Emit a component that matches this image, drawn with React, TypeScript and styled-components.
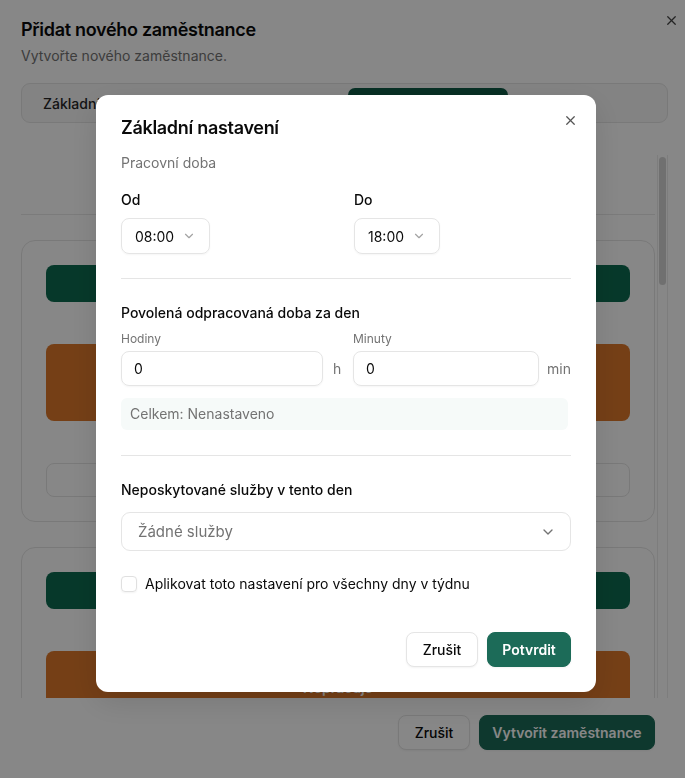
import React from "react";
import styled, { createGlobalStyle } from "styled-components";

const Global = createGlobalStyle`
  html, body { margin: 0; padding: 0; background: #fff; }
  body { font-family: Inter, "Noto Sans", "Liberation Sans", sans-serif; color: #0a0a0a; }
  * { box-sizing: border-box; }
`;

const GREEN = "#1c6b58";
const ORANGE = "#dd782b";

const Page = styled.div`
  position: relative;
  width: 685px;
  height: 778px;
  overflow: hidden;
  padding: 17px 17px 0 21px;
  display: flex;
  flex-direction: column;
`;

const PageTitle = styled.h1`
  margin: 0;
  font-size: 18px;
  line-height: 26px;
  font-weight: 600;
  letter-spacing: -0.3px;
`;

const PageSub = styled.p`
  margin: 0;
  font-size: 14px;
  line-height: 26px;
  color: #737373;
`;

const CloseBtn = styled.button<{ $top: number; $right: number }>`
  position: absolute;
  top: ${(p) => p.$top}px;
  right: ${(p) => p.$right}px;
  width: 16px;
  height: 16px;
  padding: 0;
  border: 0;
  background: none;
  display: flex;
  align-items: center;
  justify-content: center;
`;

const Tabs = styled.div`
  margin-top: 14px;
  height: 40px;
  border: 1px solid #e5e5e5;
  border-radius: 9px;
  background: #f7f7f7;
  display: flex;
  align-items: center;
  padding: 4px;
  gap: 4px;
`;

const Tab = styled.div<{ $active?: boolean }>`
  height: 100%;
  width: ${(p) => (p.$active ? 160 : 157)}px;
  display: flex;
  align-items: center;
  justify-content: ${(p) => (p.$active ? "center" : "flex-start")};
  padding-left: ${(p) => (p.$active ? "0" : "17px")};
  border-radius: 7px;
  font-size: 14px;
  font-weight: 500;
  background: ${(p) => (p.$active ? "#0f5a45" : "transparent")};
  color: ${(p) => (p.$active ? "#fff" : "#262626")};
`;

const Scroll = styled.div`
  margin-top: 32px;
  height: 543px;
  display: flex;
`;

const ScrollContent = styled.div`
  flex: 1;
  overflow: hidden;
  padding-right: 2px;
  display: flex;
  flex-direction: column;
`;

const Track = styled.div`
  width: 11px;
  border-left: 1px solid #ececec;
  border-right: 1px solid #ececec;
  padding: 2px 1px;
`;

const Thumb = styled.div`
  height: 128px;
  border-radius: 4px;
  background: #d4d4d4;
`;

const DayPicker = styled.div`
  height: 60px;
  border-bottom: 1px solid #e8e8e8;
  flex-shrink: 0;
`;

const Card = styled.div`
  margin-top: 25px;
  border: 1px solid #e5e5e5;
  border-radius: 14px;
  padding: 24px 24px;
  display: flex;
  flex-direction: column;
  gap: 42px;
  flex-shrink: 0;
`;

const Bar = styled.div<{ $kind: "work" | "off" }>`
  height: ${(p) => (p.$kind === "work" ? 37 : 77)}px;
  border-radius: 8px;
  background: ${(p) => (p.$kind === "work" ? "#0d6b50" : ORANGE)};
  color: #fff;
  font-size: 14px;
  font-weight: 600;
  display: flex;
  align-items: flex-end;
  justify-content: center;
  padding-bottom: 32px;
`;

const OutlineBar = styled.div`
  height: 34px;
  border: 1px solid #e5e5e5;
  border-radius: 8px;
  background: #fff;
`;

const Footer = styled.div`
  margin-top: 17px;
  padding-right: 13px;
  display: flex;
  justify-content: flex-end;
  gap: 9px;
`;

const Button = styled.button<{ $primary?: boolean; $w: number }>`
  width: ${(p) => p.$w}px;
  height: 35px;
  border-radius: 8px;
  font-family: inherit;
  font-size: 14px;
  font-weight: ${(p) => (p.$primary ? 600 : 500)};
  border: 1px solid ${(p) => (p.$primary ? GREEN : "#e5e5e5")};
  background: ${(p) => (p.$primary ? GREEN : "#fff")};
  color: ${(p) => (p.$primary ? "#fff" : "#0a0a0a")};
  box-shadow: 0 1px 2px rgba(0, 0, 0, 0.05);
  padding: 0;
`;

const Overlay = styled.div`
  position: fixed;
  inset: 0;
  background: rgba(0, 0, 0, 0.47);
  display: flex;
  justify-content: center;
  align-items: flex-start;
  padding: 95px 0 0 7px;
`;

const Modal = styled.div`
  position: relative;
  width: 500px;
  background: #fff;
  border-radius: 12px;
  padding: 22px 25px 25px 25px;
  display: flex;
  flex-direction: column;
  box-shadow: 0 10px 30px rgba(0, 0, 0, 0.12);
`;

const ModalTitle = styled.h2`
  margin: 0;
  font-size: 18px;
  line-height: 22px;
  font-weight: 600;
  letter-spacing: -0.3px;
`;

const Text = styled.div<{ $mt: number; $muted?: boolean; $weight?: number }>`
  margin-top: ${(p) => p.$mt}px;
  font-size: 14px;
  line-height: 20px;
  font-weight: ${(p) => p.$weight ?? 400};
  color: ${(p) => (p.$muted ? "#737373" : "#0a0a0a")};
`;

const TimeRow = styled.div`
  margin-top: 17px;
  display: grid;
  grid-template-columns: 233px 1fr;
`;

const Field = styled.div`
  display: flex;
  flex-direction: column;
  align-items: flex-start;
  gap: 8px;
`;

const FieldLabel = styled.div`
  font-size: 14px;
  line-height: 20px;
  font-weight: 500;
`;

const TimeSelect = styled.div<{ $w: number }>`
  width: ${(p) => p.$w}px;
  height: 36px;
  border: 1px solid #e5e5e5;
  border-radius: 8px;
  box-shadow: 0 1px 2px rgba(0, 0, 0, 0.04);
  display: flex;
  align-items: center;
  padding: 0 13px 0 13px;
  justify-content: space-between;
  font-size: 14px;
  color: #0a0a0a;
`;

const Divider = styled.hr<{ $mt: number }>`
  margin: ${(p) => p.$mt}px 0 0 0;
  border: 0;
  border-top: 1px solid #e5e5e5;
  height: 0;
`;

const DurRow = styled.div`
  margin-top: 8px;
  display: grid;
  grid-template-columns: 202px 30px 186px 1fr;
  grid-template-rows: 16px 35px;
  row-gap: 4px;
  align-items: center;
`;

const SmallLabel = styled.div<{ $col: number }>`
  grid-column: ${(p) => p.$col};
  grid-row: 1;
  font-size: 12px;
  line-height: 16px;
  color: #737373;
`;

const NumInput = styled.div<{ $col: number }>`
  grid-column: ${(p) => p.$col};
  grid-row: 2;
  height: 35px;
  border: 1px solid #e5e5e5;
  border-radius: 8px;
  box-shadow: 0 1px 2px rgba(0, 0, 0, 0.04);
  display: flex;
  align-items: center;
  padding-left: 12px;
  font-size: 14px;
`;

const Unit = styled.div<{ $col: number; $align: string }>`
  grid-column: ${(p) => p.$col};
  grid-row: 2;
  font-size: 14px;
  color: #737373;
  text-align: ${(p) => p.$align};
  padding-left: ${(p) => (p.$align === "left" ? "10px" : "0")};
`;

const TotalBox = styled.div`
  margin-top: 12px;
  height: 32px;
  width: 447px;
  border-radius: 6px;
  background: #f6faf9;
  display: flex;
  align-items: center;
  padding: 0 0 2px 9px;
  font-size: 14px;
  color: #737373;
`;

const ServiceSelect = styled.div`
  margin-top: 12px;
  height: 39px;
  border: 1px solid #e5e5e5;
  border-radius: 9px;
  display: flex;
  align-items: center;
  justify-content: space-between;
  padding: 0 14px 0 16px;
  font-size: 15px;
  color: #737373;
`;

const CheckRow = styled.label`
  margin-top: 25px;
  display: flex;
  align-items: center;
  gap: 8px;
  font-size: 14px;
  line-height: 16px;
`;

const Box = styled.span`
  width: 16px;
  height: 16px;
  border: 1px solid #e0e0e0;
  border-radius: 4px;
  box-shadow: 0 1px 2px rgba(0, 0, 0, 0.05);
`;

const Actions = styled.div`
  margin-top: 40px;
  display: flex;
  justify-content: flex-end;
  gap: 9px;
`;

const Chevron = ({ size, color }: { size: number; color: string }) => (
  <svg width={size} height={size} viewBox="0 0 24 24" fill="none" stroke={color} strokeWidth="2" strokeLinecap="round" strokeLinejoin="round">
    <path d="m6 9 6 6 6-6" />
  </svg>
);

const XIcon = ({ size, color }: { size: number; color: string }) => (
  <svg width={size} height={size} viewBox="0 0 24 24" fill="none" stroke={color} strokeWidth="2" strokeLinecap="round" strokeLinejoin="round">
    <path d="M18 6 6 18" />
    <path d="m6 6 12 12" />
  </svg>
);

export default function App() {
  return (
    <>
      <Global />
      <Page>
        <PageTitle>Přidat nového zaměstnance</PageTitle>
        <PageSub>Vytvořte nového zaměstnance.</PageSub>
        <CloseBtn $top={12} $right={6}>
          <XIcon size={15} color="#444" />
        </CloseBtn>
        <Tabs>
          <Tab>Základní</Tab>
          <Tab />
          <Tab $active />
        </Tabs>
        <Scroll>
          <ScrollContent>
            <DayPicker />
            <Card>
              <Bar $kind="work" />
              <Bar $kind="off" />
              <OutlineBar />
            </Card>
            <Card>
              <Bar $kind="work" />
              <Bar $kind="off">Nepracuje</Bar>
              <OutlineBar />
            </Card>
          </ScrollContent>
          <Track>
            <Thumb />
          </Track>
        </Scroll>
        <Footer>
          <Button $w={72}>Zrušit</Button>
          <Button $primary $w={176}>Vytvořit zaměstnance</Button>
        </Footer>
      </Page>

      <Overlay>
        <Modal>
          <CloseBtn $top={17} $right={18}>
            <XIcon size={15} color="#555" />
          </CloseBtn>
          <ModalTitle>Základní nastavení</ModalTitle>
          <Text $mt={14} $muted>Pracovní doba</Text>
          <TimeRow>
            <Field>
              <FieldLabel>Od</FieldLabel>
              <TimeSelect $w={89}>
                08:00 <Chevron size={14} color="#a3a3a3" />
              </TimeSelect>
            </Field>
            <Field>
              <FieldLabel>Do</FieldLabel>
              <TimeSelect $w={86}>
                18:00 <Chevron size={14} color="#a3a3a3" />
              </TimeSelect>
            </Field>
          </TimeRow>
          <Divider $mt={24} />
          <Text $mt={24} $weight={500}>Povolená odpracovaná doba za den</Text>
          <DurRow>
            <SmallLabel $col={1}>Hodiny</SmallLabel>
            <SmallLabel $col={3}>Minuty</SmallLabel>
            <NumInput $col={1}>0</NumInput>
            <Unit $col={2} $align="left">h</Unit>
            <NumInput $col={3}>0</NumInput>
            <Unit $col={4} $align="right">min</Unit>
          </DurRow>
          <TotalBox>Celkem: Nenastaveno</TotalBox>
          <Divider $mt={25} />
          <Text $mt={24} $weight={500}>Neposkytované služby v tento den</Text>
          <ServiceSelect>
            Žádné služby <Chevron size={16} color="#737373" />
          </ServiceSelect>
          <CheckRow>
            <Box />
            Aplikovat toto nastavení pro všechny dny v týdnu
          </CheckRow>
          <Actions>
            <Button $w={72}>Zrušit</Button>
            <Button $primary $w={84}>Potvrdit</Button>
          </Actions>
        </Modal>
      </Overlay>
    </>
  );
}
